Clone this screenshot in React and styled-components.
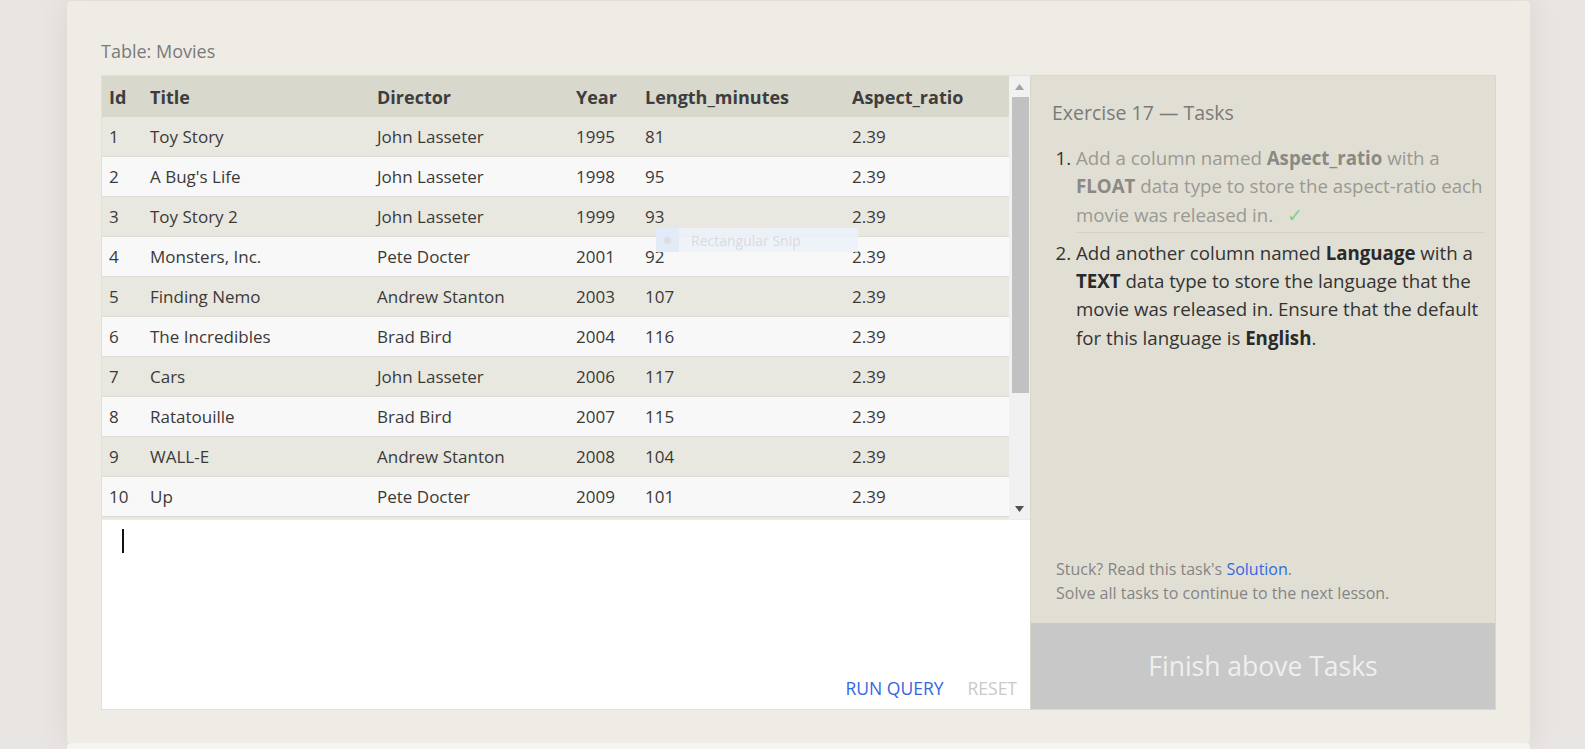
import React from "react";
import styled, { createGlobalStyle } from "styled-components";

const Global = createGlobalStyle`
  html, body { margin: 0; padding: 0; }
  body {
    background: #e9e5e2;
    font-family: "Open Sans", "Noto Sans", sans-serif;
    color: #333;
    overflow: hidden;
  }
`;

const Page = styled.div`
  width: 1585px;
  height: 749px;
  overflow: hidden;
  padding-top: 1px;
  box-sizing: border-box;
`;

const Card = styled.section`
  margin-left: 67px;
  width: 1463px;
  height: 742px;
  box-sizing: border-box;
  background: #efece5;
  border-radius: 4px;
  box-shadow: 0 0 28px rgba(90, 70, 60, 0.1);
  padding: 38px 33px 0 34px;
`;

const NextCard = styled.div`
  margin-left: 67px;
  width: 1463px;
  height: 20px;
  background: #f5f4f0;
  border-radius: 4px 4px 0 0;
`;

const Label = styled.div`
  font-size: 18px;
  line-height: 24px;
  color: #7a7a7a;
  height: 24px;
  margin-bottom: 12px;
`;

const Workspace = styled.div`
  display: flex;
  height: 635px;
`;

const LeftCol = styled.div`
  width: 929px;
  display: flex;
  flex-direction: column;
  border: 1px solid #e2e0d8;
  border-right: none;
  box-sizing: border-box;
`;

const TableBox = styled.div`
  position: relative;
  height: 443px;
  display: flex;
  background: #f1f1f1;
  flex: none;
`;

const Rows = styled.div`
  width: 908px;
  overflow: hidden;
  background: #e9e8e0;
`;

const cols = "41px 227px 199px 69px 207px 165px";

const HeaderRow = styled.div`
  display: grid;
  grid-template-columns: ${cols};
  height: 41px;
  align-items: center;
  background: #d9d8cc;
  font-size: 18px;
  font-weight: 700;
  color: #3d3d3d;
`;

const Row = styled.div`
  display: grid;
  grid-template-columns: ${cols};
  height: 40px;
  box-sizing: border-box;
  align-items: center;
  background: ${(p) => (p.$odd ? "#e9e8e0" : "#f8f8f8")};
  border-bottom: 1px solid #dddcd5;
  font-size: 17px;
  color: #3a3a3a;
`;

const Cell = styled.div`
  padding-left: 7px;
  white-space: nowrap;
`;

const Scrollbar = styled.div`
  width: 21px;
  background: #f1f1f1;
  display: flex;
  flex-direction: column;
  align-items: center;
`;

const Arrow = styled.div`
  height: 21px;
  flex: none;
  display: flex;
  align-items: center;
  justify-content: center;
`;

const Thumb = styled.div`
  width: 17px;
  margin-left: 1px;
  height: 296px;
  background: #c1c1c1;
  flex: none;
`;

const TrackRest = styled.div`
  flex: 1;
`;

const Snip = styled.div`
  position: absolute;
  left: 554px;
  top: 152px;
  width: 202px;
  height: 24px;
  background: rgba(236, 242, 250, 0.85);
  display: flex;
  align-items: center;
  font-family: "Open Sans", sans-serif;
  font-size: 14px;
  color: #d9dade;
`;

const SnipIcon = styled.div`
  width: 23px;
  height: 24px;
  background: rgba(225, 234, 246, 0.9);
  display: flex;
  align-items: center;
  justify-content: center;
  margin-right: 12px;
  &::after {
    content: "";
    width: 7px;
    height: 7px;
    border-radius: 50%;
    background: #dcdde0;
  }
`;

const Editor = styled.div`
  flex: 1;
  margin-top: 1px;
  background: #fff;
  position: relative;
  display: flex;
  flex-direction: column;
  padding: 9px 13px 9px 20px;
  box-sizing: border-box;
`;

const Caret = styled.div`
  width: 2px;
  height: 24px;
  background: #111;
`;

const Actions = styled.div`
  margin-top: auto;
  display: flex;
  justify-content: flex-end;
  gap: 24px;
  font-size: 17.5px;
`;

const ActionBtn = styled.span`
  color: ${(p) => (p.$disabled ? "#c9c9c9" : "#3567e0")};
  text-transform: uppercase;
`;

const Panel = styled.aside`
  width: 466px;
  background: #e1dfd4;
  border: 1px solid #dad8cd;
  box-sizing: border-box;
  display: flex;
  flex-direction: column;
`;

const PanelBody = styled.div`
  flex: 1;
  padding: 23px 10px 18px 21px;
  display: flex;
  flex-direction: column;
`;

const PanelTitle = styled.div`
  font-size: 19.5px;
  line-height: 28px;
  color: #7a7a7a;
  margin-bottom: 17px;
`;

const TaskList = styled.ol`
  margin: 0;
  padding-left: 24px;
  font-size: 18.7px;
  line-height: 28.3px;
`;

const Task = styled.li`
  color: ${(p) => (p.$done ? "#9a9993" : "#333")};
  padding-bottom: ${(p) => (p.$done ? "3px" : "0")};
  border-bottom: ${(p) => (p.$done ? "1px solid #d3d1c6" : "none")};
  margin-bottom: ${(p) => (p.$done ? "6px" : "0")};
  &::marker {
    color: #333;
  }
  b {
    font-weight: 700;
    color: ${(p) => (p.$done ? "#8a8984" : "#2a2a2a")};
  }
`;

const Check = styled.span`
  color: #86cf86;
  margin-left: 14px;
`;

const Help = styled.div`
  margin-top: auto;
  font-size: 16px;
  line-height: 24px;
  color: #858585;
  padding-left: 4px;
`;

const Link = styled.a`
  color: #3567e0;
  text-decoration: none;
`;

const FinishButton = styled.div`
  height: 86px;
  flex: none;
  background: #c8c8c8;
  color: #efefef;
  font-size: 26.5px;
  display: flex;
  align-items: center;
  justify-content: center;
`;

const movies = [
  [1, "Toy Story", "John Lasseter", 1995, 81],
  [2, "A Bug's Life", "John Lasseter", 1998, 95],
  [3, "Toy Story 2", "John Lasseter", 1999, 93],
  [4, "Monsters, Inc.", "Pete Docter", 2001, 92],
  [5, "Finding Nemo", "Andrew Stanton", 2003, 107],
  [6, "The Incredibles", "Brad Bird", 2004, 116],
  [7, "Cars", "John Lasseter", 2006, 117],
  [8, "Ratatouille", "Brad Bird", 2007, 115],
  [9, "WALL-E", "Andrew Stanton", 2008, 104],
  [10, "Up", "Pete Docter", 2009, 101],
];

const Tri = ({ up, color }) => (
  <svg width="9" height="6" viewBox="0 0 9 6">
    <path d={up ? "M0 6 L4.5 0 L9 6 Z" : "M0 0 L4.5 6 L9 0 Z"} fill={color} />
  </svg>
);

export default function App() {
  return (
    <>
      <Global />
      <Page>
        <Card>
          <Label>Table: Movies</Label>
          <Workspace>
            <LeftCol>
              <TableBox>
                <Rows>
                  <HeaderRow>
                    <Cell>Id</Cell>
                    <Cell>Title</Cell>
                    <Cell>Director</Cell>
                    <Cell>Year</Cell>
                    <Cell>Length_minutes</Cell>
                    <Cell>Aspect_ratio</Cell>
                  </HeaderRow>
                  {movies.map((m, i) => (
                    <Row key={m[0]} $odd={i % 2 === 0}>
                      <Cell>{m[0]}</Cell>
                      <Cell>{m[1]}</Cell>
                      <Cell>{m[2]}</Cell>
                      <Cell>{m[3]}</Cell>
                      <Cell>{m[4]}</Cell>
                      <Cell>2.39</Cell>
                    </Row>
                  ))}
                </Rows>
                <Scrollbar>
                  <Arrow>
                    <Tri up color="#a3a3a3" />
                  </Arrow>
                  <Thumb />
                  <TrackRest />
                  <Arrow>
                    <Tri color="#505050" />
                  </Arrow>
                </Scrollbar>
                <Snip>
                  <SnipIcon />
                  Rectangular Snip
                </Snip>
              </TableBox>
              <Editor>
                <Caret />
                <Actions>
                  <ActionBtn>Run Query</ActionBtn>
                  <ActionBtn $disabled>Reset</ActionBtn>
                </Actions>
              </Editor>
            </LeftCol>
            <Panel>
              <PanelBody>
                <PanelTitle>Exercise 17 — Tasks</PanelTitle>
                <TaskList>
                  <Task $done>
                    Add a column named <b>Aspect_ratio</b> with a <b>FLOAT</b> data type to
                    store the aspect-ratio each movie was released in.
                    <Check>✓</Check>
                  </Task>
                  <Task>
                    Add another column named <b>Language</b> with a <b>TEXT</b> data type to
                    store the language that the movie was released in. Ensure that the default
                    for this language is <b>English</b>.
                  </Task>
                </TaskList>
                <Help>
                  Stuck? Read this task's <Link>Solution</Link>.
                  <br />
                  Solve all tasks to continue to the next lesson.
                </Help>
              </PanelBody>
              <FinishButton>Finish above Tasks</FinishButton>
            </Panel>
          </Workspace>
        </Card>
        <NextCard />
      </Page>
    </>
  );
}
